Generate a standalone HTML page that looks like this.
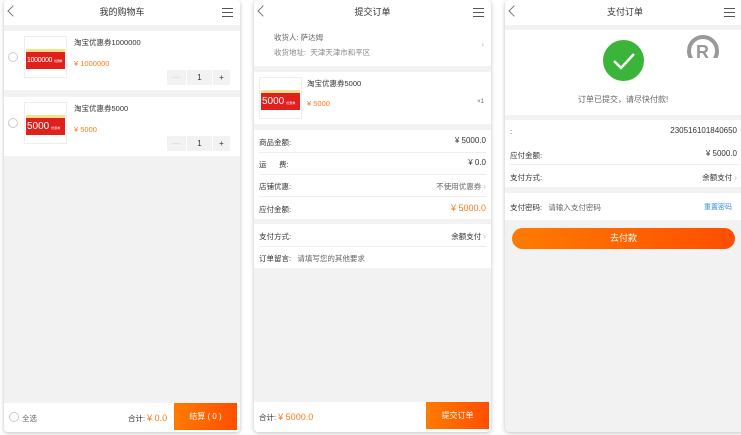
<!DOCTYPE html>
<html><head><meta charset="utf-8"><style>
*{margin:0;padding:0;box-sizing:border-box}
body{width:741px;height:435px;background:#fff;font-family:"Liberation Sans","Noto Sans CJK SC",sans-serif;position:relative;overflow:hidden;color:#333}
.p{position:absolute;top:0;height:432px;background:#f2f2f2;border-radius:4px;box-shadow:0 1px 4px rgba(0,0,0,.25);overflow:hidden}
.a{position:absolute}
.hd{position:absolute;left:0;right:0;top:0;height:25px;background:#fff;font-size:9px;text-align:center;line-height:25px;color:#333}
.back{position:absolute;left:5px;top:7px;width:8px;height:8px;border-left:1px solid #777;border-bottom:1px solid #777;transform:rotate(45deg)}
.menu{position:absolute;right:7px;top:8px;width:11px;height:9px;border-top:1px solid #555;border-bottom:1px solid #555}
.menu:after{content:"";position:absolute;left:0;right:0;top:3px;border-top:1px solid #555}
.w{position:absolute;left:0;right:0;background:#fff}
.t{position:absolute;font-size:7.5px;white-space:nowrap}
.or{color:#ff7a1a}
.g{color:#666}
.thumb{position:absolute;width:43px;height:42px;background:#fff;border:1px solid #eee}
.thumb .y{position:absolute;left:1px;right:1px;top:12px;height:3px;background:#f7e08a}
.thumb .r{position:absolute;left:1px;right:1px;top:15px;height:17px;background:#e0201c;color:#fff;font-size:10px;line-height:18px;padding-left:1px;overflow:hidden;white-space:nowrap}
.thumb .r.s{font-size:7px;letter-spacing:-0.3px}
.thumb .r span{font-size:3px;margin-left:2px}
.qty{position:absolute;height:15px;background:#f2f2f2;font-size:8px;text-align:center;line-height:15px}
.line{position:absolute;left:5px;right:5px;height:1px;background:#eee}
.rad{position:absolute;width:10px;height:10px;border:1px solid #ccc;border-radius:50%;background:#fff}
.btn{position:absolute;background:linear-gradient(90deg,#ff7b00,#ff4e00);color:#fff;font-size:8px;text-align:center}
.ch{color:#bbb;font-size:8px}
</style></head><body>

<!-- Panel 1 -->
<div class="p" style="left:4px;width:236px">
 <div class="hd">我的购物车<div class="back"></div><div class="menu"></div></div>
 <div class="w" style="top:31px;height:59px">
  <div class="rad" style="left:4px;top:21px"></div>
  <div class="thumb" style="left:20px;top:5px"><div class="y"></div><div class="r s">1000000<span>优惠券</span></div></div>
  <div class="t" style="left:70px;top:6px">淘宝优惠券1000000</div>
  <div class="t or" style="left:70px;top:28px">¥ 1000000</div>
  <div class="qty" style="left:163px;top:39px;width:19px;color:#ccc">—</div>
  <div class="qty" style="left:183px;top:39px;width:25px">1</div>
  <div class="qty" style="left:209px;top:39px;width:17px">+</div>
 </div>
 <div class="w" style="top:97px;height:59px">
  <div class="rad" style="left:4px;top:21px"></div>
  <div class="thumb" style="left:20px;top:5px"><div class="y"></div><div class="r">5000<span>优惠券</span></div></div>
  <div class="t" style="left:70px;top:6px">淘宝优惠券5000</div>
  <div class="t or" style="left:70px;top:28px">¥ 5000</div>
  <div class="qty" style="left:163px;top:39px;width:19px;color:#ccc">—</div>
  <div class="qty" style="left:183px;top:39px;width:25px">1</div>
  <div class="qty" style="left:209px;top:39px;width:17px">+</div>
 </div>
 <div class="w" style="top:403px;height:29px">
  <div class="rad" style="left:5px;top:9px"></div>
  <div class="t g" style="left:18px;top:10px">全选</div>
  <div class="t" style="left:124px;top:10px">合计: <span class="or" style="font-size:9px">¥ 0.0</span></div>
  <div class="btn" style="left:170px;top:0;width:63px;height:27px;line-height:27px">结算 ( 0 )</div>
 </div>
</div>

<!-- Panel 2 -->
<div class="p" style="left:254px;width:237px">
 <div class="hd">提交订单<div class="back"></div><div class="menu"></div></div>
 <div class="w" style="top:25px;height:41px">
  <div class="t g" style="left:20px;top:7px">收货人: 萨达姆</div>
  <div class="t g" style="left:20px;top:22px;color:#888">收货地址:&nbsp;&nbsp;天津天津市和平区</div>
  <div class="t ch" style="right:7px;top:15px">›</div>
 </div>
 <div class="w" style="top:72px;height:52px">
  <div class="thumb" style="left:5px;top:5px"><div class="y"></div><div class="r">5000<span>优惠券</span></div></div>
  <div class="t" style="left:53px;top:6px">淘宝优惠券5000</div>
  <div class="t or" style="left:53px;top:27px">¥ 5000</div>
  <div class="t g" style="right:7px;top:27px;font-size:6px">×1</div>
 </div>
 <div class="w" style="top:130px;height:89px">
  <div class="t" style="left:5px;top:7px">商品金额:</div><div class="t" style="right:5px;top:6px;font-size:8px">¥ 5000.0</div>
  <div class="line" style="top:22px"></div>
  <div class="t" style="left:5px;top:29px">运&nbsp;&nbsp;&nbsp;&nbsp;&nbsp;&nbsp;费:</div><div class="t" style="right:5px;top:28px;font-size:8px">¥ 0.0</div>
  <div class="line" style="top:44px"></div>
  <div class="t" style="left:5px;top:51px">店铺优惠:</div><div class="t g" style="right:5px;top:51px">不使用优惠券 <span class="ch">›</span></div>
  <div class="line" style="top:66px"></div>
  <div class="t" style="left:5px;top:74px">应付金额:</div><div class="t or" style="right:5px;top:73px;font-size:9px">¥ 5000.0</div>
 </div>
 <div class="w" style="top:224px;height:44px">
  <div class="t" style="left:5px;top:7px">支付方式:</div><div class="t" style="right:5px;top:7px">余额支付 <span class="ch">›</span></div>
  <div class="line" style="top:22px"></div>
  <div class="t" style="left:5px;top:29px">订单留言:&nbsp;&nbsp;&nbsp;<span class="g">请填写您的其他要求</span></div>
 </div>
 <div class="w" style="top:402px;height:30px">
  <div class="t" style="left:5px;top:10px">合计: <span class="or" style="font-size:9px">¥ 5000.0</span></div>
  <div class="btn" style="left:172px;top:0;width:63px;height:27px;line-height:27px">提交订单</div>
 </div>
</div>

<!-- Panel 3 -->
<div class="p" style="left:505px;width:240px">
 <div class="hd">支付订单<div class="back"></div><div class="menu" style="right:10px"></div></div>
 <div class="w" style="top:30px;height:85px">
  <svg class="a" style="left:180px;top:3px" width="36" height="25" viewBox="0 0 36 25"><circle cx="18" cy="18" r="14" fill="none" stroke="#999" stroke-width="4"/><text x="11" y="25" font-size="18" font-weight="bold" fill="#999" font-family="Liberation Sans">R</text></svg>
  <div class="a" style="left:98px;top:10px;width:41px;height:41px;border-radius:50%;background:#3ab53a"></div>
  <svg class="a" style="left:98px;top:10px" width="41" height="41"><path d="M11 21 L18 28 L31 14" fill="none" stroke="#fff" stroke-width="2.5"/></svg>
  <div class="t g" style="left:73px;top:64px;font-size:8px">订单已提交，请尽快付款!</div>
 </div>
 <div class="w" style="top:120px;height:67px">
  <div class="t" style="left:5px;top:7px">:</div><div class="t" style="right:8px;top:6px;font-size:8px">230516101840650</div>
  <div class="t" style="left:5px;top:30px">应付金额:</div><div class="t" style="right:8px;top:29px;font-size:8px">¥ 5000.0</div>
  <div class="line" style="top:44px"></div>
  <div class="t" style="left:5px;top:52px">支付方式:</div><div class="t" style="right:8px;top:52px">余额支付 <span class="ch">›</span></div>
 </div>
 <div class="w" style="top:193px;height:27px">
  <div class="t" style="left:5px;top:9px">支付密码:&nbsp;&nbsp;&nbsp;<span class="g">请输入支付密码</span></div>
  <div class="t" style="left:199px;top:9px;color:#3a8ee6;font-size:7px">重置密码</div>
 </div>
 <div class="btn" style="left:7px;top:228px;width:223px;height:21px;line-height:21px;border-radius:11px;font-size:9px">去付款</div>
</div>
</body></html>
